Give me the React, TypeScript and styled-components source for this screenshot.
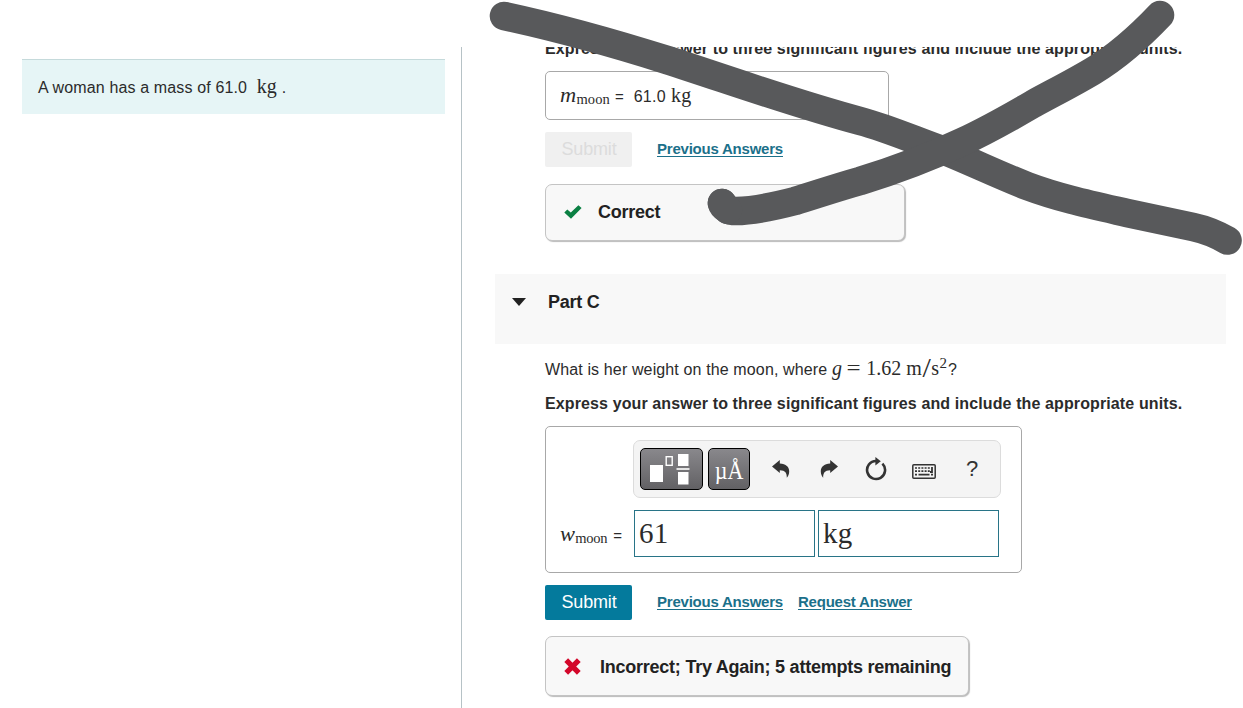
import styled, { createGlobalStyle } from "styled-components";

const INSTRUCTIONS =
  "Express your answer to three significant figures and include the appropriate units.";

const UndoIcon = () => (
  <svg width="18" height="18" viewBox="0 0 18 18" fill="#333">
    <path d="M0 6.6 7.8 0v3.5C14 3.6 17.4 7 17.2 11.8c-.1 2.4-.9 4.2-2.4 6 .2-4.6-1.4-7.6-7-7.6V13z" />
  </svg>
);

const RedoIcon = () => (
  <svg width="18" height="18" viewBox="0 0 18 18" fill="#333">
    <path d="M18 6.6 10.2 0v3.5C4 3.6.6 7 .8 11.8c.1 2.4.9 4.2 2.4 6-.2-4.6 1.4-7.6 7-7.6V13z" />
  </svg>
);

const ResetIcon = () => (
  <svg width="22" height="24" viewBox="0 0 22 24" fill="none">
    <path d="M17.4 6.6A9 9 0 1 1 11 4" stroke="#333" strokeWidth="2.6" />
    <path d="M10.4 0v8.6l5.4-4.4z" fill="#333" />
  </svg>
);

const KeyboardIcon = () => (
  <svg width="24" height="15" viewBox="0 0 24 15" fill="none">
    <rect x=".8" y=".8" width="22.4" height="13.4" rx="1" stroke="#333" strokeWidth="1.5" />
    <path d="M3 4h16M3 7.2h15" stroke="#333" strokeWidth="1.7" strokeDasharray="2 1.2" />
    <path d="M20 3v5h-2M3 10.6h2M6.5 10.6h11M19 10.6h2" stroke="#333" strokeWidth="1.8" />
  </svg>
);

const TemplatesIcon = () => (
  <svg width="41" height="32" viewBox="0 0 41 32" fill="#fff">
    <rect x="0" y="12" width="13" height="17" />
    <rect x="16.2" y="3.7" width="6" height="8.6" fill="none" stroke="#fff" strokeWidth="1.4" />
    <rect x="28" y="1" width="10.5" height="12" />
    <rect x="26.5" y="15.2" width="13" height="1.6" />
    <rect x="28" y="19" width="10.5" height="12.5" />
  </svg>
);

const CheckIcon = () => (
  <svg width="18" height="14" viewBox="0 0 18 14" fill="#0b8043">
    <path d="m.3 7.4 3-3 3.5 3.2L14.4.2l3.2 2.8L7 13.8z" />
  </svg>
);

const CrossIcon = () => (
  <svg width="17" height="17" viewBox="0 0 17 17">
    <path d="m2.2 2.2 12.6 12.6m0-12.6L2.2 14.8" stroke="#d3072a" strokeWidth="5.3" />
  </svg>
);

const CrossOut = () => (
  <Scribble width="1243" height="260" viewBox="0 0 1243 260">
    <path d="M504 16C560 28 613 43 667 60C732 81 796 104 860 121C890 129 916 141 945 151C972 162 999 175 1027 186C1059 198 1092 205 1127 213L1193 227C1207 230 1218 235 1227.500 240.500" />
    <path d="M1160 15C1141 35 1118 56 1093 71C1073 83 1053 93 1033 104C1009 118 986 131 962 142C930 157 896 170 860 181C835 188 815 195 795 201C772 207 751 211 736 211C729 211 723 208 722 203" />
    <path d="M722 203L728 210" />
  </Scribble>
);

const App = () => {
  return (
    <Page>
      <GlobalStyle />
      <Sidebar>
        <Note>
          A woman has a mass of 61.0 <NoteUnit>kg</NoteUnit> .
        </Note>
      </Sidebar>
      <Content>
        <PartBody>
          <Instructions>{INSTRUCTIONS}</Instructions>
          <AnswerBox>
            <Variable $gap={5}>
              <i>m</i>
              <sub>moon</sub>
            </Variable>
            <Equals>=</Equals>
            <Value>61.0</Value>
            <Math>kg</Math>
          </AnswerBox>
          <Actions>
            <SubmitButton disabled>Submit</SubmitButton>
            <Link href="#">Previous Answers</Link>
          </Actions>
          <Feedback $width={360} $height={57} $gap={16} $top={17} $pad={0}>
            <CheckIcon />
            Correct
          </Feedback>
        </PartBody>
        <PartHeader>
          <Caret />
          Part C
        </PartHeader>
        <PartBody>
          <Question>
            What is her weight on the moon, where{" "}
            <Formula>
              <i>g</i>
              <Relation>=</Relation>1.62 m<Slash>/</Slash>s<sup>2</sup>
            </Formula>
            ?
          </Question>
          <Instructions>{INSTRUCTIONS}</Instructions>
          <EntryBox>
            <Toolbar>
              <ToolButton $width={63}>
                <TemplatesIcon />
              </ToolButton>
              <ToolButton $width={42}>
                <span>µÅ</span>
              </ToolButton>
              <ToolIcons>
                <UndoIcon />
                <RedoIcon />
                <ResetIcon />
                <KeyboardIcon />
                <span>?</span>
              </ToolIcons>
            </Toolbar>
            <EntryRow>
              <EntryLabel>
                <Variable $gap={6}>
                  <i>w</i>
                  <sub>moon</sub>
                </Variable>
                <Equals>=</Equals>
              </EntryLabel>
              <Field>61</Field>
              <Field>kg</Field>
            </EntryRow>
          </EntryBox>
          <Actions>
            <SubmitButton>Submit</SubmitButton>
            <Link href="#">Previous Answers</Link>
            <Link href="#">Request Answer</Link>
          </Actions>
          <Feedback $width={424} $height={60} $gap={19} $top={16} $pad={1}>
            <CrossIcon />
            Incorrect; Try Again; 5 attempts remaining
          </Feedback>
        </PartBody>
      </Content>
      <CrossOut />
    </Page>
  );
};

export default App;

const GlobalStyle = createGlobalStyle`
  * {
    box-sizing: border-box;
  }
  body {
    margin: 0;
    overflow: hidden;
    background-color: #fff;
    font-family: "Liberation Sans", Arial, sans-serif;
    color: #2b2b2b;
  }
  svg {
    display: block;
    flex-shrink: 0;
  }
`;

const Page = styled.div`
  position: relative;
  display: flex;
  height: 708px;
  padding-top: 47px;
  overflow: hidden;
`;

const Sidebar = styled.aside`
  width: 461px;
  padding: 12px 16px 0 22px;
  flex-shrink: 0;
`;

const Note = styled.div`
  height: 55px;
  padding-left: 16px;
  border-top: 1px solid #c5dadb;
  background-color: #e6f5f6;
  font-size: 16px;
  line-height: 56px;
  letter-spacing: 0.14px;
  white-space: pre;
`;

const NoteUnit = styled.span`
  margin-left: 5px;
  font-family: "Liberation Serif", serif;
  font-size: 20px;
  letter-spacing: 0.2px;
  line-height: 1;
`;

const Content = styled.main`
  width: 765px;
  height: 661px;
  padding-left: 33px;
  border-left: 1px solid #b6c2c6;
  flex-shrink: 0;
  overflow: hidden;
`;

const PartBody = styled.section`
  padding-left: 50px;
  &:first-child {
    height: 227px;
    margin-top: -11px;
    margin-bottom: 11px;
  }
`;

const Instructions = styled.div`
  height: 35px;
  font-size: 16px;
  font-weight: 700;
  line-height: 26px;
  letter-spacing: 0.115px;
  white-space: nowrap;
`;

const Math = styled.span`
  font-family: "Liberation Serif", serif;
  font-size: 20px;
  letter-spacing: 0.2px;
`;

const Variable = styled(Math)<{ $gap: number }>`
  margin-right: ${({ $gap }) => $gap}px;
  font-size: 20px;
  letter-spacing: 0;
  i {
    display: inline-block;
    transform: scaleX(1.12);
    transform-origin: left;
    margin-right: 2px;
  }
  sub {
    font-size: 14.5px;
    letter-spacing: 0.1px;
    line-height: 0;
    vertical-align: -2px;
  }
`;

const Equals = styled.span`
  font-size: 15px;
`;

const Value = styled.span`
  margin: 0 5px 0 10px;
  font-size: 16px;
  letter-spacing: 0.3px;
`;

const AnswerBox = styled.div`
  display: flex;
  align-items: baseline;
  width: 344px;
  height: 49px;
  padding: 12px 14px 0;
  border: 1px solid #a8a8a8;
  border-radius: 5px;
`;

const Actions = styled.div`
  display: flex;
  align-items: center;
  height: 35px;
  margin-top: 12px;
`;

const SubmitButton = styled.button`
  width: 87px;
  height: 35px;
  margin-right: 25px;
  padding: 0 0 1px 1px;
  border: none;
  border-radius: 2px;
  background-color: #047a9c;
  color: #fff;
  font-family: inherit;
  font-size: 18px;
  letter-spacing: -0.15px;
  &:disabled {
    background-color: #f0f0f0;
    color: #dcdcdc;
  }
`;

const Link = styled.a`
  margin-right: 15px;
  padding-bottom: 2px;
  color: #1b708a;
  font-size: 15px;
  font-weight: 700;
  letter-spacing: -0.22px;
  text-underline-offset: 2px;
`;

const Feedback = styled.div<{
  $width: number;
  $height: number;
  $gap: number;
  $top: number;
  $pad: number;
}>`
  display: flex;
  align-items: center;
  column-gap: ${({ $gap }) => $gap}px;
  width: ${({ $width }) => $width}px;
  height: ${({ $height }) => $height}px;
  margin-top: ${({ $top }) => $top}px;
  padding: ${({ $pad }) => $pad}px 0 ${({ $pad }) => 1 - $pad}px 18px;
  border: 1px solid #c4c4c4;
  border-radius: 7px;
  box-shadow: 1px 1px 1px #bbb;
  background-color: #f8f8f8;
  color: #222;
  font-size: 18px;
  font-weight: 700;
  line-height: 22px;
  letter-spacing: -0.24px;
  white-space: nowrap;
`;

const PartHeader = styled.header`
  display: flex;
  align-items: center;
  height: 70px;
  padding: 0 0 14px 17px;
  background-color: #f8f8f8;
  color: #222;
  font-size: 18px;
  font-weight: 700;
  letter-spacing: -0.25px;
`;

const Caret = styled.span`
  margin-right: 22px;
  border: 7px solid transparent;
  border-top: 8px solid #222;
  border-bottom: none;
`;

const Question = styled.div`
  height: 47px;
  padding-top: 12px;
  font-size: 16px;
  line-height: 28px;
  letter-spacing: 0.13px;
  white-space: nowrap;
`;

const Formula = styled(Math)`
  font-size: 20px;
  line-height: 1;
  letter-spacing: 0;
  sup {
    margin: 0 1px 0 0.5px;
    font-size: 15px;
    line-height: 0;
    vertical-align: 7px;
  }
`;

const Relation = styled.span`
  display: inline-block;
  margin: 0 6.5px 0 6.5px;
  transform: scaleX(1.25);
`;

const Slash = styled.span`
  display: inline-block;
  margin: 0 2px;
  transform: scale(1.5, 1.35);
`;

const EntryBox = styled.div`
  width: 477px;
  height: 147px;
  padding: 13px 14px 0;
  border: 1px solid #a8a8a8;
  border-radius: 5px;
`;

const Toolbar = styled.div`
  display: flex;
  align-items: center;
  width: 368px;
  height: 58px;
  margin-left: 73px;
  padding-left: 6px;
  border: 1px solid #dcdcdc;
  border-radius: 7px;
  background-color: #f4f4f4;
`;

const ToolButton = styled.button<{ $width: number }>`
  display: flex;
  align-items: center;
  justify-content: center;
  width: ${({ $width }) => $width}px;
  height: 42px;
  margin-right: 5px;
  padding: 0 2px 0 0;
  border: 1px solid #000;
  border-radius: 5px;
  background: linear-gradient(#89888c, #626164);
  color: #fff;
  font-family: "Liberation Serif", serif;
  font-size: 22px;
  span {
    display: block;
    padding: 4px 0 0 2px;
    transform: scaleY(1.12);
  }
`;

const ToolIcons = styled.div`
  display: grid;
  grid-template-columns: repeat(5, 48px);
  align-items: center;
  justify-items: center;
  height: 42px;
  margin-left: 1px;
  color: #333;
  font-size: 22px;
  svg:nth-child(-n + 2) {
    margin-left: 2px;
  }
  svg:nth-child(4) {
    margin-top: 4px;
  }
`;

const EntryRow = styled.div`
  display: flex;
  align-items: center;
  height: 47px;
  margin-top: 12px;
`;

const EntryLabel = styled.div`
  width: 74px;
  padding-top: 1px;
  white-space: nowrap;
  ${Variable} sub {
    letter-spacing: -0.3px;
  }
`;

const Field = styled.div`
  width: 181px;
  height: 47px;
  margin-right: 3px;
  padding-left: 4px;
  border: 1px solid #287487;
  font-family: "Liberation Serif", serif;
  font-size: 29px;
  line-height: 45px;
  letter-spacing: 0.3px;
`;

const Scribble = styled.svg`
  position: absolute;
  top: 0;
  left: 0;
  fill: none;
  stroke: #58595b;
  stroke-width: 28.6px;
  stroke-linecap: round;
  stroke-linejoin: round;
  pointer-events: none;
`;
